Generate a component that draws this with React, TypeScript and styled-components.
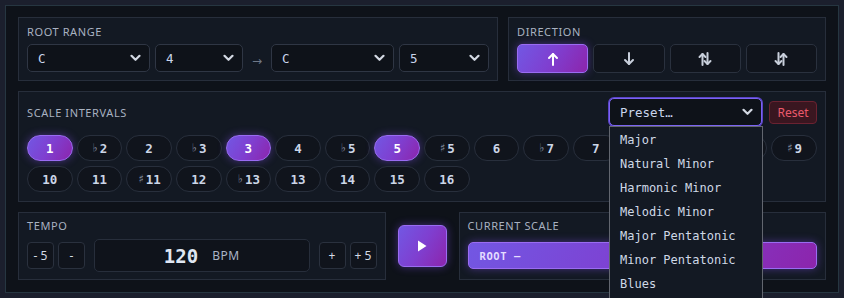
import React from "react";
import styled, { createGlobalStyle, css } from "styled-components";

const Global = createGlobalStyle`
  html, body { margin: 0; padding: 0; overflow: hidden; }
  body { background: #1b1f2d; width: 844px; height: 298px; }
  * { box-sizing: border-box; }
`;

const MONO = `"DejaVu Sans Mono", "Liberation Mono", monospace`;
const SANS = `"Noto Sans", "Open Sans", "DejaVu Sans", sans-serif`;

const gradient = css`
  background: linear-gradient(120deg, #7257e3 0%, #7f3fd0 50%, #8c25ac 100%);
  border: 1px solid #9a6cf2;
  box-shadow: 0 0 8px rgba(130, 80, 240, 0.45);
  color: #ffffff;
`;

const Panel = styled.div`
  margin: 5px;
  width: 834px;
  background: #0e1219;
  border: 1px solid #263641;
  padding: 11px 12px 12px;
  display: flex;
  flex-direction: column;
  gap: 10px;
  position: relative;
`;

const TopRow = styled.div`
  display: grid;
  grid-template-columns: 480px 1fr;
  gap: 10px;
`;

const BottomRow = styled.div`
  display: grid;
  grid-template-columns: 1fr 49px 1fr;
  gap: 12px;
  align-items: center;
`;

const Section = styled.div<{ $pt?: number; $pb?: number }>`
  background: #131923;
  border: 1px solid #272e3b;
  padding: ${(p) => p.$pt ?? 7}px 8px ${(p) => p.$pb ?? 7}px;
  display: flex;
  flex-direction: column;
`;

const Label = styled.div<{ $mb?: number }>`
  font-family: ${SANS};
  font-size: 11px;
  line-height: 14px;
  letter-spacing: 0.6px;
  color: #a9b2c1;
  text-transform: uppercase;
  margin-bottom: ${(p) => p.$mb ?? 5}px;
`;

const Row = styled.div<{ $gap?: number }>`
  display: flex;
  align-items: center;
  gap: ${(p) => p.$gap ?? 5}px;
`;

const SelectBox = styled.div<{ $w?: number; $focus?: boolean }>`
  ${(p) => (p.$w ? `width: ${p.$w}px; flex: none;` : `flex: 1;`)}
  height: 28px;
  background: #0e1219;
  border: 1px solid ${(p) => (p.$focus ? "#7b63f2" : "#2f3644")};
  ${(p) => p.$focus && `box-shadow: 0 0 0 1px #5a44c8;`}
  border-radius: 5px;
  display: flex;
  align-items: center;
  justify-content: space-between;
  padding: 0 8px 0 10px;
  font-family: ${MONO};
  font-size: 12.5px;
  color: #c9d5ec;
  position: relative;
`;

const ArrowSep = styled.div`
  width: 18px;
  flex: none;
  text-align: center;
  color: #6f7888;
  font-family: ${SANS};
  font-size: 12px;
  padding-top: 5px;
`;

const Chevron = () => (
  <svg width="11" height="8" viewBox="0 0 11 8">
    <path d="M1.5 1.8 L5.5 5.8 L9.5 1.8" fill="none" stroke="#d3d9e3" strokeWidth="2.2" strokeLinecap="round" strokeLinejoin="round" />
  </svg>
);

const DirGrid = styled.div`
  display: grid;
  grid-template-columns: repeat(4, 1fr);
  gap: 5px;
`;

const DirButton = styled.div<{ $active?: boolean }>`
  height: 29px;
  border-radius: 5px;
  display: flex;
  align-items: center;
  justify-content: center;
  ${(p) =>
    p.$active
      ? gradient
      : css`
          background: #10141c;
          border: 1px solid #2a313e;
          color: #c8cfdb;
        `}
`;

const Header = styled.div`
  display: flex;
  align-items: center;
  height: 28px;
  margin-bottom: 9px;
`;

const HeaderLabel = styled(Label)`
  margin: 0;
  flex: 1;
  padding-top: 1px;
`;

const ResetButton = styled.div`
  width: 48px;
  height: 23px;
  margin-left: 7px;
  border-radius: 4px;
  background: #3a1620;
  border: 1px solid #6a2231;
  color: #ea5a6c;
  font-family: ${SANS};
  font-size: 12px;
  display: flex;
  align-items: center;
  justify-content: center;
`;

const ChipGrid = styled.div`
  display: grid;
  grid-template-columns: repeat(16, 1fr);
  column-gap: 4px;
  row-gap: 5px;
`;

const Chip = styled.div<{ $active?: boolean }>`
  height: 26px;
  border-radius: 13px;
  display: flex;
  align-items: center;
  justify-content: center;
  font-family: ${MONO};
  font-weight: bold;
  font-size: 12.5px;
  ${(p) =>
    p.$active
      ? gradient
      : css`
          background: #10141c;
          border: 1px solid #282f3c;
          color: #ccd6e7;
        `}
`;

const Accidental = styled.span`
  font-weight: normal;
  font-size: 12px;
  color: #868fa0;
  margin-right: 1px;
`;

const TempoButton = styled.div`
  width: 27px;
  height: 27px;
  flex: none;
  border-radius: 4px;
  background: #10141c;
  border: 1px solid #2a313e;
  color: #d4dbe6;
  font-family: ${SANS};
  font-size: 12px;
  display: flex;
  align-items: center;
  justify-content: center;
`;

const BpmDisplay = styled.div`
  flex: 1;
  height: 33px;
  margin: 0 5px;
  border-radius: 5px;
  background: #0f131b;
  border: 1px solid #272e3b;
  display: flex;
  align-items: center;
  justify-content: center;
  gap: 14px;
`;

const BpmValue = styled.span`
  font-family: ${MONO};
  font-weight: bold;
  font-size: 19px;
  color: #dfe6f2;
  padding-top: 1px;
`;

const BpmUnit = styled.span`
  font-family: ${SANS};
  font-size: 12px;
  letter-spacing: 0.5px;
  color: #aab4c6;
`;

const PlayButton = styled.div`
  height: 42px;
  border-radius: 6px;
  display: flex;
  align-items: center;
  justify-content: center;
  ${gradient}
`;

const ScaleSlot = styled.div`
  height: 33px;
  display: flex;
  align-items: center;
`;

const ScaleBar = styled.div`
  flex: 1;
  height: 27px;
  border-radius: 5px;
  ${gradient}
  display: flex;
  align-items: center;
  padding-left: 11px;
  font-family: ${MONO};
  font-size: 10.5px;
  font-weight: bold;
  letter-spacing: 0.6px;
  color: #e4dcff;
`;

const DropList = styled.div`
  position: absolute;
  left: 603px;
  top: 120px;
  width: 154px;
  height: 200px;
  background: #131923;
  border: 1px solid #62666f;
  padding-top: 1px;
  z-index: 5;
`;

const DropItem = styled.div`
  height: 24px;
  line-height: 24px;
  padding-left: 10px;
  font-family: ${MONO};
  font-size: 12px;
  color: #cfd8e6;
  white-space: nowrap;
`;

const Arrow = ({ d }: { d: "up" | "down" | "updown" | "downup" }) => {
  const up = (x: number, w: number) => (
    <g>
      <path d={`M${x} 14 V3`} />
      <path d={`M${x - w} ${3 + w} L${x} 3 L${x + w} ${3 + w}`} />
    </g>
  );
  const down = (x: number, w: number) => (
    <g>
      <path d={`M${x} 2 V13`} />
      <path d={`M${x - w} ${13 - w} L${x} 13 L${x + w} ${13 - w}`} />
    </g>
  );
  return (
    <svg width="16" height="16" viewBox="0 0 16 16" fill="none" stroke="currentColor" strokeWidth="2" strokeLinecap="round" strokeLinejoin="round">
      {d === "up" && up(8, 4)}
      {d === "down" && down(8, 4)}
      {d === "updown" && (
        <>
          {up(5.5, 3)}
          {down(10.5, 3)}
        </>
      )}
      {d === "downup" && (
        <>
          {down(5.5, 3)}
          {up(10.5, 3)}
        </>
      )}
    </svg>
  );
};

const intervals = [
  "1", "♭2", "2", "♭3", "3", "4", "♭5", "5", "♯5", "6", "♭7", "7", "8", "♭9", "9", "♯9",
  "10", "11", "♯11", "12", "♭13", "13", "14", "15", "16",
];
const activeSet = new Set(["1", "3", "5"]);

const presets = [
  "Major", "Natural Minor", "Harmonic Minor", "Melodic Minor", "Major Pentatonic",
  "Minor Pentatonic", "Blues",
];

const ChipLabel = ({ text }: { text: string }) => {
  const acc = text[0] === "♭" || text[0] === "♯";
  return acc ? (
    <>
      <Accidental>{text[0]}</Accidental>
      {text.slice(1)}
    </>
  ) : (
    <>{text}</>
  );
};

export default function App() {
  return (
    <>
      <Global />
      <Panel>
        <TopRow>
          <Section>
            <Label>Root Range</Label>
            <Row $gap={5}>
              <SelectBox $w={123}>C<Chevron /></SelectBox>
              <SelectBox $w={88}>4<Chevron /></SelectBox>
              <ArrowSep>→</ArrowSep>
              <SelectBox $w={123}>C<Chevron /></SelectBox>
              <SelectBox>5<Chevron /></SelectBox>
            </Row>
          </Section>
          <Section>
            <Label>Direction</Label>
            <DirGrid>
              <DirButton $active><Arrow d="up" /></DirButton>
              <DirButton><Arrow d="down" /></DirButton>
              <DirButton><Arrow d="updown" /></DirButton>
              <DirButton><Arrow d="downup" /></DirButton>
            </DirGrid>
          </Section>
        </TopRow>

        <Section $pt={6} $pb={9}>
          <Header>
            <HeaderLabel>Scale Intervals</HeaderLabel>
            <SelectBox $w={153} $focus>Preset…<Chevron /></SelectBox>
            <ResetButton>Reset</ResetButton>
          </Header>
          <ChipGrid>
            {intervals.map((t) => (
              <Chip key={t} $active={activeSet.has(t)}>
                <ChipLabel text={t} />
              </Chip>
            ))}
          </ChipGrid>
        </Section>

        <BottomRow>
          <Section $pt={6}>
            <Label $mb={6}>Tempo</Label>
            <Row $gap={4}>
              <TempoButton>- 5</TempoButton>
              <TempoButton>-</TempoButton>
              <BpmDisplay>
                <BpmValue>120</BpmValue>
                <BpmUnit>BPM</BpmUnit>
              </BpmDisplay>
              <TempoButton>+</TempoButton>
              <TempoButton>+ 5</TempoButton>
            </Row>
          </Section>
          <PlayButton>
            <svg width="10" height="12" viewBox="0 0 10 12">
              <path d="M1 0.5 L9.5 6 L1 11.5 Z" fill="#ffffff" />
            </svg>
          </PlayButton>
          <Section $pt={6}>
            <Label $mb={6}>Current Scale</Label>
            <ScaleSlot>
              <ScaleBar>ROOT —</ScaleBar>
            </ScaleSlot>
          </Section>
        </BottomRow>

        <DropList>
          {presets.map((p) => (
            <DropItem key={p}>{p}</DropItem>
          ))}
        </DropList>
      </Panel>
    </>
  );
}
